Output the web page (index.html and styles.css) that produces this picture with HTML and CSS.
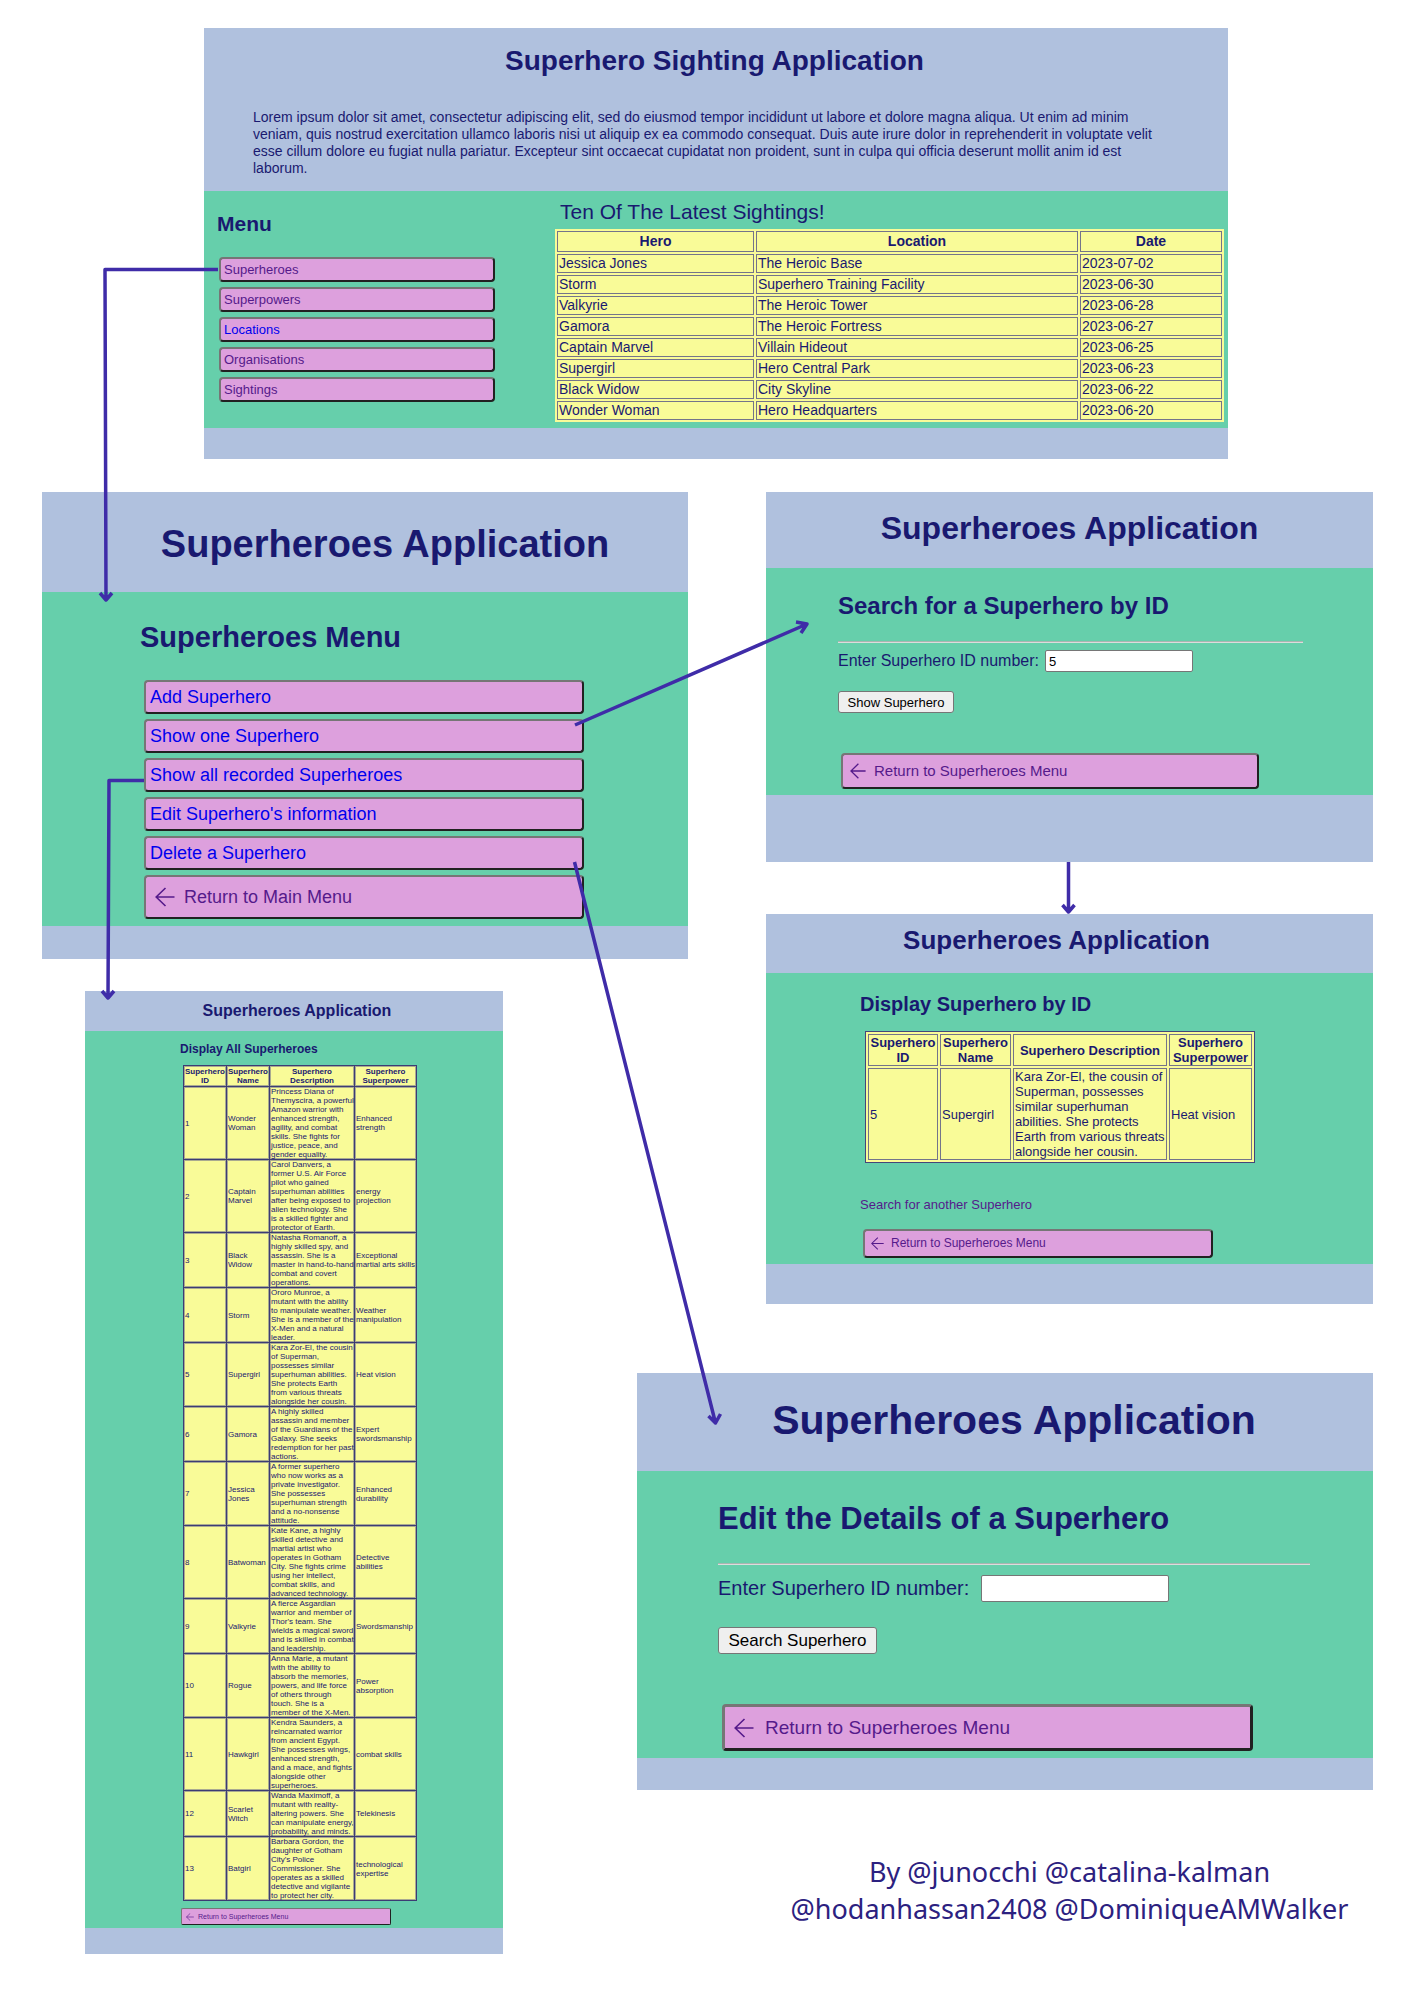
FILE: index.html
```html
<!DOCTYPE html>
<html lang="en">
<head>
<meta charset="utf-8">
<meta name="viewport" content="width=device-width, initial-scale=1">
<title>Superhero Sighting Application</title>
<link rel="stylesheet" href="styles.css">
</head>
<body>
<svg class="sprite" aria-hidden="true">
  <symbol id="arrow-left" viewBox="0 0 20 20">
    <path d="M19.5 10H1.2M10.5 1L1.2 10l9.300 9" fill="none" stroke="currentColor" stroke-width="1.6"/>
  </symbol>
</svg>
<div class="board">

  <section class="screen home">
    <header class="screen-head">
      <h1>Superhero Sighting Application</h1>
      <p>Lorem ipsum dolor sit amet, consectetur adipiscing elit, sed do eiusmod tempor incididunt ut labore et dolore magna aliqua. Ut enim ad minim veniam, quis nostrud exercitation ullamco laboris nisi ut aliquip ex ea commodo consequat. Duis aute irure dolor in reprehenderit in voluptate velit esse cillum dolore eu fugiat nulla pariatur. Excepteur sint occaecat cupidatat non proident, sunt in culpa qui officia deserunt mollit anim id est laborum.</p>
    </header>
    <div class="screen-main">
      <div class="side">
        <h2>Menu</h2>
        <nav class="menu">
          <a class="tile visited" href="#superheroes">Superheroes</a>
          <a class="tile visited" href="#superpowers">Superpowers</a>
          <a class="tile" href="#locations">Locations</a>
          <a class="tile visited" href="#organisations">Organisations</a>
          <a class="tile visited" href="#sightings">Sightings</a>
        </nav>
      </div>
      <table class="grid sightings">
        <caption>Ten Of The Latest Sightings!</caption>
        <colgroup><col class="c-hero"><col class="c-place"><col class="c-date"></colgroup>
        <thead><tr><th>Hero</th><th>Location</th><th>Date</th></tr></thead>
        <tbody>
          <tr><td>Jessica Jones</td><td>The Heroic Base</td><td>2023-07-02</td></tr>
          <tr><td>Storm</td><td>Superhero Training Facility</td><td>2023-06-30</td></tr>
          <tr><td>Valkyrie</td><td>The Heroic Tower</td><td>2023-06-28</td></tr>
          <tr><td>Gamora</td><td>The Heroic Fortress</td><td>2023-06-27</td></tr>
          <tr><td>Captain Marvel</td><td>Villain Hideout</td><td>2023-06-25</td></tr>
          <tr><td>Supergirl</td><td>Hero Central Park</td><td>2023-06-23</td></tr>
          <tr><td>Black Widow</td><td>City Skyline</td><td>2023-06-22</td></tr>
          <tr><td>Wonder Woman</td><td>Hero Headquarters</td><td>2023-06-20</td></tr>
        </tbody>
      </table>
    </div>
    <footer class="screen-foot"></footer>
  </section>

  <div class="flows">
    <div class="flow-left">

      <section class="screen heroes" id="superheroes">
        <header class="screen-head"><h1>Superheroes Application</h1></header>
        <div class="screen-main">
          <h2>Superheroes Menu</h2>
          <nav class="menu">
            <a class="tile" href="#add">Add Superhero</a>
            <a class="tile" href="#search">Show one Superhero</a>
            <a class="tile" href="#all">Show all recorded Superheroes</a>
            <a class="tile" href="#edit">Edit Superhero's information</a>
            <a class="tile" href="#delete">Delete a Superhero</a>
            <a class="tile back visited" href="#home"><svg aria-hidden="true"><use href="#arrow-left"/></svg>Return to Main Menu</a>
          </nav>
        </div>
        <footer class="screen-foot"></footer>
      </section>

      <section class="screen all" id="all">
        <header class="screen-head"><h1>Superheroes Application</h1></header>
        <div class="screen-main">
          <h2>Display All Superheroes</h2>
          <table class="grid roster">
            <colgroup><col class="c-id"><col class="c-name"><col class="c-text"><col class="c-power"></colgroup>
            <thead><tr><th>Superhero ID</th><th>Superhero Name</th><th>Superhero Description</th><th>Superhero Superpower</th></tr></thead>
            <tbody>
              <tr><td>1</td><td>Wonder Woman</td><td>Princess Diana of Themyscira, a powerful Amazon warrior with enhanced strength, agility, and combat skills. She fights for justice, peace, and gender equality.</td><td>Enhanced strength</td></tr>
              <tr><td>2</td><td>Captain Marvel</td><td>Carol Danvers, a former U.S. Air Force pilot who gained superhuman abilities after being exposed to alien technology. She is a skilled fighter and protector of Earth.</td><td>energy projection</td></tr>
              <tr><td>3</td><td>Black Widow</td><td>Natasha Romanoff, a highly skilled spy, and assassin. She is a master in hand-to-hand combat and covert operations.</td><td>Exceptional martial arts skills</td></tr>
              <tr><td>4</td><td>Storm</td><td>Ororo Munroe, a mutant with the ability to manipulate weather. She is a member of the X-Men and a natural leader.</td><td>Weather manipulation</td></tr>
              <tr><td>5</td><td>Supergirl</td><td>Kara Zor-El, the cousin of Superman, possesses similar superhuman abilities. She protects Earth from various threats alongside her cousin.</td><td>Heat vision</td></tr>
              <tr><td>6</td><td>Gamora</td><td>A highly skilled assassin and member of the Guardians of the Galaxy. She seeks redemption for her past actions.</td><td>Expert swordsmanship</td></tr>
              <tr><td>7</td><td>Jessica Jones</td><td>A former superhero who now works as a private investigator. She possesses superhuman strength and a no-nonsense attitude.</td><td>Enhanced durability</td></tr>
              <tr><td>8</td><td>Batwoman</td><td>Kate Kane, a highly skilled detective and martial artist who operates in Gotham City. She fights crime using her intellect, combat skills, and advanced technology.</td><td>Detective abilities</td></tr>
              <tr><td>9</td><td>Valkyrie</td><td>A fierce Asgardian warrior and member of Thor's team. She wields a magical sword and is skilled in combat and leadership.</td><td>Swordsmanship</td></tr>
              <tr><td>10</td><td>Rogue</td><td>Anna Marie, a mutant with the ability to absorb the memories, powers, and life force of others through touch. She is a member of the X-Men.</td><td>Power absorption</td></tr>
              <tr><td>11</td><td>Hawkgirl</td><td>Kendra Saunders, a reincarnated warrior from ancient Egypt. She possesses wings, enhanced strength, and a mace, and fights alongside other superheroes.</td><td>combat skills</td></tr>
              <tr><td>12</td><td>Scarlet Witch</td><td>Wanda Maximoff, a mutant with reality-altering powers. She can manipulate energy, probability, and minds.</td><td>Telekinesis</td></tr>
              <tr><td>13</td><td>Batgirl</td><td>Barbara Gordon, the daughter of Gotham City's Police Commissioner. She operates as a skilled detective and vigilante to protect her city.</td><td>technological expertise</td></tr>
            </tbody>
          </table>
          <a class="tile back visited" href="#superheroes"><svg aria-hidden="true"><use href="#arrow-left"/></svg>Return to Superheroes Menu</a>
        </div>
        <footer class="screen-foot"></footer>
      </section>
    </div>

    <div class="flow-right">

      <section class="screen search" id="search">
        <header class="screen-head"><h1>Superheroes Application</h1></header>
        <div class="screen-main">
          <h2>Search for a Superhero by ID</h2>
          <hr>
          <form>
            <div class="field"><label for="show-id">Enter Superhero ID number:</label><input id="show-id" type="text" value="5"></div>
            <button type="button">Show Superhero</button>
          </form>
          <a class="tile back visited" href="#superheroes"><svg aria-hidden="true"><use href="#arrow-left"/></svg>Return to Superheroes Menu</a>
        </div>
        <footer class="screen-foot"></footer>
      </section>

      <section class="screen result">
        <header class="screen-head"><h1>Superheroes Application</h1></header>
        <div class="screen-main">
          <h2>Display Superhero by ID</h2>
          <table class="grid record">
            <colgroup><col class="c-id"><col class="c-name"><col class="c-text"><col class="c-power"></colgroup>
            <thead><tr><th>Superhero ID</th><th>Superhero Name</th><th>Superhero Description</th><th>Superhero Superpower</th></tr></thead>
            <tbody><tr><td>5</td><td>Supergirl</td><td>Kara Zor-El, the cousin of Superman, possesses similar superhuman abilities. She protects Earth from various threats alongside her cousin.</td><td>Heat vision</td></tr></tbody>
          </table>
          <a class="again visited" href="#search">Search for another Superhero</a>
          <a class="tile back visited" href="#superheroes"><svg aria-hidden="true"><use href="#arrow-left"/></svg>Return to Superheroes Menu</a>
        </div>
        <footer class="screen-foot"></footer>
      </section>

      <section class="screen edit" id="edit">
        <header class="screen-head"><h1>Superheroes Application</h1></header>
        <div class="screen-main">
          <h2>Edit the Details of a Superhero</h2>
          <hr>
          <form>
            <div class="field"><label for="edit-id">Enter Superhero ID number:</label><input id="edit-id" type="text"></div>
            <button type="button">Search Superhero</button>
          </form>
          <a class="tile back visited" href="#superheroes"><svg aria-hidden="true"><use href="#arrow-left"/></svg>Return to Superheroes Menu</a>
        </div>
        <footer class="screen-foot"></footer>
      </section>

      <p class="credits">By @junocchi @catalina-kalman<br>@hodanhassan2408 @DominiqueAMWalker</p>
    </div>
  </div>

  <svg class="arrows" viewBox="0 0 1414 2000" aria-hidden="true">
    <path d="M218 269.500H105L106 600M100 593l6 7 6-7"/>
    <path d="M575 725L807 624M796 622l11 2-6 9"/>
    <path d="M144 780.500H109L108 998M102 991l6 7 6-7"/>
    <path d="M574.500 862L715.500 1423M708.500 1416l7 7 5-9"/>
    <path d="M1068.500 862V912M1062.500 905l6 7 6-7"/>
  </svg>
</div>
</body>
</html>
```
FILE: styles.css
```css
* { box-sizing: border-box; }

body {
  margin: 0;
  background: #fff;
  color: #191970;
  font-family: "Liberation Sans", Arial, sans-serif;
}

h1, h2, p { margin: 0; }
a { color: #00e; text-decoration: none; }
a.visited { color: #551a8b; }
.sprite { display: none; }

.board {
  position: relative;
  max-width: 1414px;
  margin: 0 auto;
  padding: 28px 41px 46px 42px;
}

.arrows {
  position: absolute;
  top: 0;
  left: 0;
  width: 100%;
  pointer-events: none;
  fill: none;
  stroke: #3f2ca8;
  stroke-width: 3.5;
  stroke-linejoin: round;
}

.flows {
  display: grid;
  grid-template-columns: 595fr 51fr 685fr;
  margin-top: 33px;
}

.flow-left, .flow-right {
  grid-row: 1;
  display: flex;
  flex-direction: column;
}

.flow-left { grid-column: 1 / 3; gap: 32px; }
.flow-right { grid-column: 2 / 4; align-items: flex-end; }

/* Shared screen parts */
.screen { width: 100%; background: #b0c1de; }
.screen-head h1 { text-align: center; }
.screen-main { background: #66cfab; }

.menu { display: flex; flex-direction: column; }

.tile {
  display: flex;
  align-items: center;
  background: #dda0dd;
  border: 2px solid;
  border-color: #767676 #212121 #212121 #767676;
  border-radius: 4px;
}

.grid {
  table-layout: fixed;
  background: #f9fb98;
  border-spacing: 2px;
}

.grid th, .grid td {
  padding: 0 1px;
  border: 1px solid #74748a;
}

.grid td { text-align: left; }

hr {
  height: 2px;
  border: 0;
  border-top: 1px solid #a9b5b0;
  background: #dcdcdc;
}

.field { display: flex; align-items: center; }

input {
  padding: 0 3px;
  border: 1px solid #767676;
  border-radius: 2px;
  background: #fff;
  color: #000;
  font-family: inherit;
}

button {
  padding: 0;
  border: 1px solid #767676;
  border-radius: 3px;
  background: #efefef;
  color: #000;
  font-family: inherit;
}

/* Home */
.home { max-width: 1024px; margin-left: 162px; }
.home .screen-head { padding: 17px 52px 14px 49px; }
.home h1 { font-size: 28px; line-height: 32px; }
.home .screen-head p { margin-top: 32px; font-size: 14px; line-height: 17px; }
.home .screen-main { display: flex; align-items: flex-start; padding: 9px 4px 6px 13px; }
.home .side { width: 338px; padding-top: 12px; }
.home h2 { font-size: 21px; line-height: 24px; }
.home .menu { width: 276px; margin: 21px 0 0 2px; gap: 5px; }
.home .tile { padding: 0 3px; font-size: 13px; line-height: 21px; }
.home .screen-foot { height: 31px; }

.sightings { flex: 1; font-size: 14px; line-height: 17px; }
.sightings caption {
  margin-bottom: 5px;
  padding-left: 5px;
  text-align: left;
  font-size: 21px;
  line-height: 24px;
}
.sightings th { padding: 1px; }
.sightings .c-hero { width: 197px; }
.sightings .c-date { width: 142px; }

/* Superheroes menu */
.heroes .screen-head { padding: 30px 0 26px 40px; }
.heroes h1 { font-size: 38px; line-height: 44px; }
.heroes .screen-main { padding: 28px 98px 7px; }
.heroes h2 { font-size: 29px; line-height: 34px; }
.heroes .menu { max-width: 440px; margin: 26px 0 0 4px; gap: 5px; }
.heroes .tile { padding: 0 4px; font-size: 18px; line-height: 30px; }
.heroes .back { gap: 9px; padding-left: 9px; line-height: 40px; }
.heroes .back svg { width: 20px; height: 20px; }
.heroes .screen-foot { height: 33px; }

/* All superheroes */
.all { max-width: 418px; margin-left: 43px; }
.all .screen-head { padding: 11px 0 11px 6px; }
.all h1 { font-size: 16px; line-height: 18px; }
.all .screen-main { padding: 11px 40px 3px 95px; }
.all h2 { font-size: 12px; line-height: 14px; }
.all .tile { width: 210px; margin: 7px 0 0 1px; gap: 4px; padding-left: 4px; border-width: 1px; border-radius: 2px; font-size: 7px; line-height: 15px; }
.all .tile svg { width: 8px; height: 8px; }
.all .screen-foot { height: 26px; }

.roster {
  width: 234px;
  margin: 9px 0 0 3px;
  border-collapse: collapse;
  font-size: 8px;
  line-height: 9px;
}
.roster th, .roster td { padding: 0; border-color: #3c3c74; box-shadow: inset 0 0 0 1px #a9aa90; }
.roster th { padding: 1px 0; }
.roster td { padding-left: 1px; }
.roster .c-id, .roster .c-name { width: 43px; }
.roster .c-text { width: 85px; }

/* Search by ID */
.search { max-width: 607px; }
.search .screen-head { padding: 18px 0 22px; }
.search h1 { font-size: 32px; line-height: 36px; }
.search .screen-main { padding: 24px 70px 6px 72px; }
.search h2 { font-size: 24px; line-height: 28px; }
.search hr { margin: 21px 0 7px; }
.search .field { gap: 6px; font-size: 16px; line-height: 22px; }
.search input { width: 148px; height: 22px; font-size: 13px; }
.search button { width: 116px; height: 22px; margin-top: 19px; font-size: 13px; }
.search .tile { max-width: 418px; margin: 40px 0 0 3px; gap: 8px; padding-left: 7px; font-size: 15px; line-height: 32px; }
.search .tile svg { width: 16px; height: 16px; }
.search .screen-foot { height: 67px; }

/* Search result */
.result { max-width: 607px; margin-top: 52px; }
.result .screen-head { padding: 11px 26px 18px 0; }
.result h1 { font-size: 26px; line-height: 30px; }
.result .screen-main { padding: 19px 94px 6px; }
.result h2 { font-size: 20px; line-height: 24px; }
.result .again { display: block; margin-top: 34px; font-size: 13px; line-height: 16px; }
.result .tile { max-width: 350px; margin: 16px 0 0 3px; gap: 7px; padding-left: 6px; font-size: 12px; line-height: 25px; }
.result .tile svg { width: 13px; height: 13px; }
.result .screen-foot { height: 40px; }

.record {
  width: 390px;
  margin: 15px 0 0 5px;
  border: 1px solid #45457a;
  font-size: 13px;
  line-height: 15px;
}
.record .c-id { width: 70px; }
.record .c-name { width: 71px; }
.record .c-text { width: 154px; }

/* Edit */
.edit { margin-top: 69px; }
.edit .screen-head { padding: 24px 0 28px 18px; }
.edit h1 { font-size: 41px; line-height: 46px; }
.edit .screen-main { padding: 30px 63px 7px 81px; }
.edit h2 { font-size: 31px; line-height: 36px; }
.edit hr { margin: 26px 0 10px; }
.edit .field { gap: 12px; font-size: 20px; line-height: 27px; }
.edit input { width: 188px; height: 27px; font-size: 17px; }
.edit button { width: 159px; height: 27px; margin-top: 25px; font-size: 17px; }
.edit .tile { max-width: 531px; margin: 50px 0 0 4px; gap: 11px; padding-left: 9px; border-width: 3px; font-size: 19px; line-height: 41px; }
.edit .tile svg { width: 20px; height: 20px; }
.edit .screen-foot { height: 32px; }

.credits {
  width: 100%;
  max-width: 607px;
  margin-top: 63px;
  text-align: center;
  color: #2c2180;
  font-family: "Noto Sans", sans-serif;
  font-size: 27px;
  line-height: 37px;
}
```
